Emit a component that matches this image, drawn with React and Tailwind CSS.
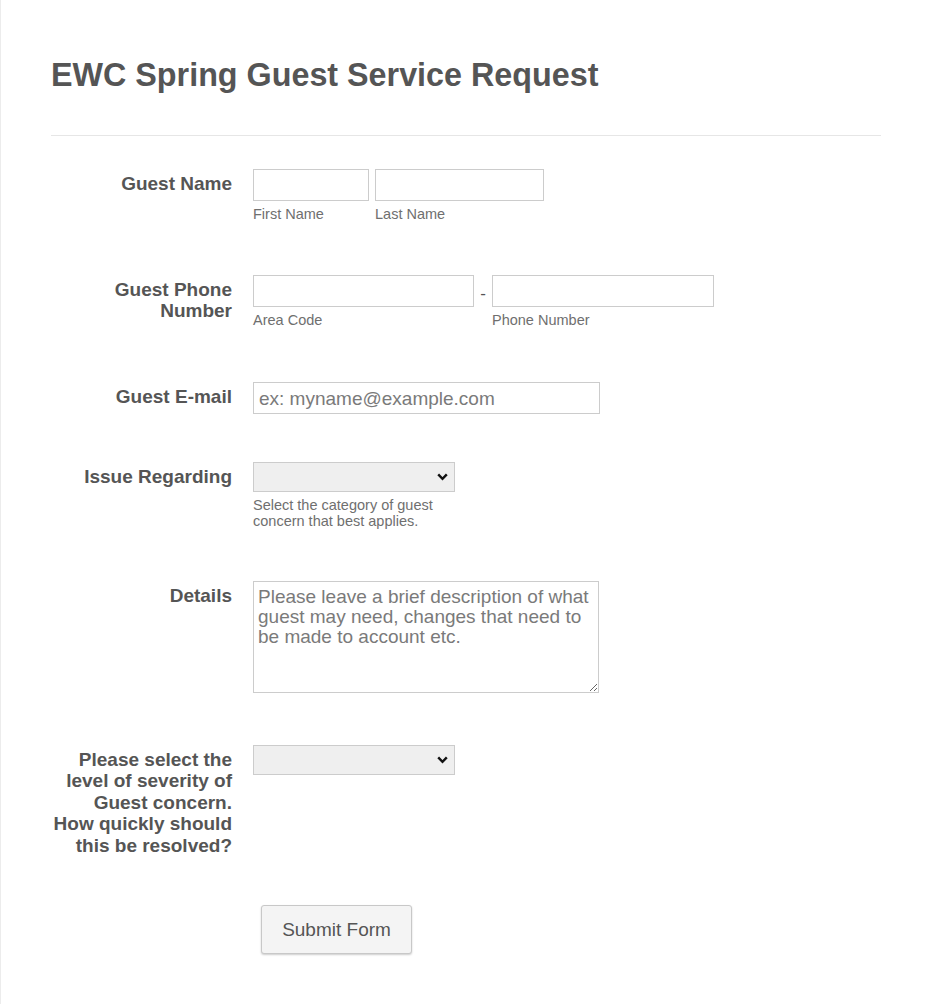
import React from 'react';

const Label = ({ children }) => (
    <label className="w-[181px] shrink-0 pt-[4px] text-right text-[19px] leading-[21.5px] font-bold text-[#555]">
        {children}
    </label>
);

const Sub = ({ children }) => (
    <span className="mt-[5px] block text-[14.5px] leading-[17px] text-[#6f6f6f]">{children}</span>
);

const inputCls = "h-[32px] border border-[#ccc] bg-white px-[5px] text-[19px] text-[#555] outline-none placeholder:text-[#7a7a7a]";

const Select = ({ options }) => (
    <div className="relative w-[202px]">
        <select
            className="block h-[30px] w-[202px] appearance-none border border-[#ccc] bg-[#efefef] px-[4px] text-[15px] text-[#555] outline-none"
            defaultValue=""
        >
            <option value=""></option>
            {options.map((o) => (
                <option key={o}>{o}</option>
            ))}
        </select>
        <svg
            className="pointer-events-none absolute right-[7px] top-[11px]"
            width="11"
            height="8"
            viewBox="0 0 11 8"
        >
            <path d="M1.2 1.3 L5.5 5.8 L9.8 1.3" fill="none" stroke="#111" strokeWidth="2.4" />
        </svg>
    </div>
);

const App = () => {
    return (
        <div className="min-h-screen bg-white border-l border-[#ececec] font-['Liberation_Sans',Arial,sans-serif] text-[#555]">
            <div className="pl-[50px] pr-[49px] pt-[56px] pb-[50px]">
                <h1 className="text-[32.3px] leading-[1.2] font-bold text-[#555]">EWC Spring Guest Service Request</h1>
                <hr className="mt-[40px] border-0 border-t border-[#e6e6e6]" />

                <form className="flex flex-col">
                    {/* guest name */}
                    <div className="mt-[33px] flex items-start">
                        <Label>Guest Name</Label>
                        <div className="ml-[21px] flex gap-[6px]">
                            <div className="flex flex-col">
                                <input type="text" className={`${inputCls} w-[116px]`} />
                                <Sub>First Name</Sub>
                            </div>
                            <div className="flex flex-col">
                                <input type="text" className={`${inputCls} w-[169px]`} />
                                <Sub>Last Name</Sub>
                            </div>
                        </div>
                    </div>

                    {/* phone */}
                    <div className="mt-[52px] flex items-start">
                        <Label>Guest Phone Number</Label>
                        <div className="ml-[21px] flex">
                            <div className="flex flex-col">
                                <input type="text" className={`${inputCls} w-[221px]`} />
                                <Sub>Area Code</Sub>
                            </div>
                            <span className="w-[18px] pt-[6px] text-center text-[17px] text-[#555]">-</span>
                            <div className="flex flex-col">
                                <input type="text" className={`${inputCls} w-[222px]`} />
                                <Sub>Phone Number</Sub>
                            </div>
                        </div>
                    </div>

                    {/* email */}
                    <div className="mt-[53px] flex items-start">
                        <Label>Guest E-mail</Label>
                        <div className="ml-[21px]">
                            <input type="email" placeholder="ex: myname@example.com" className={`${inputCls} w-[347px] pt-[2px]`} />
                        </div>
                    </div>

                    {/* issue */}
                    <div className="mt-[48px] flex items-start">
                        <Label>Issue Regarding</Label>
                        <div className="ml-[21px] flex flex-col">
                            <Select options={['Billing', 'Scheduling', 'Service']} />
                            <span className="mt-[5px] block w-[202px] text-[14.5px] leading-[16px] text-[#6f6f6f]">
                                Select the category of guest concern that best applies.
                            </span>
                        </div>
                    </div>

                    {/* details */}
                    <div className="mt-[52px] flex items-start">
                        <Label>Details</Label>
                        <div className="ml-[21px]">
                            <textarea
                                placeholder="Please leave a brief description of what guest may need, changes that need to be made to account etc."
                                className="block h-[112px] w-[346px] border border-[#ccc] bg-white px-[4px] py-[5px] text-[19px] leading-[20px] text-[#555] outline-none placeholder:text-[#7a7a7a]"
                            />
                        </div>
                    </div>

                    {/* severity */}
                    <div className="mt-[52px] flex items-start">
                        <Label>Please select the level of severity of Guest concern. How quickly should this be resolved?</Label>
                        <div className="ml-[21px]">
                            <Select options={['Low', 'Medium', 'High']} />
                        </div>
                    </div>

                    <div className="mt-[49px] pl-[210px]">
                        <button
                            type="button"
                            className="h-[49px] w-[151px] rounded-[3px] border border-[#c8c8c8] bg-[#f4f4f4] text-[19px] text-[#555] shadow-[0_1px_2px_rgba(0,0,0,0.2)]"
                        >
                            Submit Form
                        </button>
                    </div>
                </form>
            </div>
        </div>
    );
};

export default App;
